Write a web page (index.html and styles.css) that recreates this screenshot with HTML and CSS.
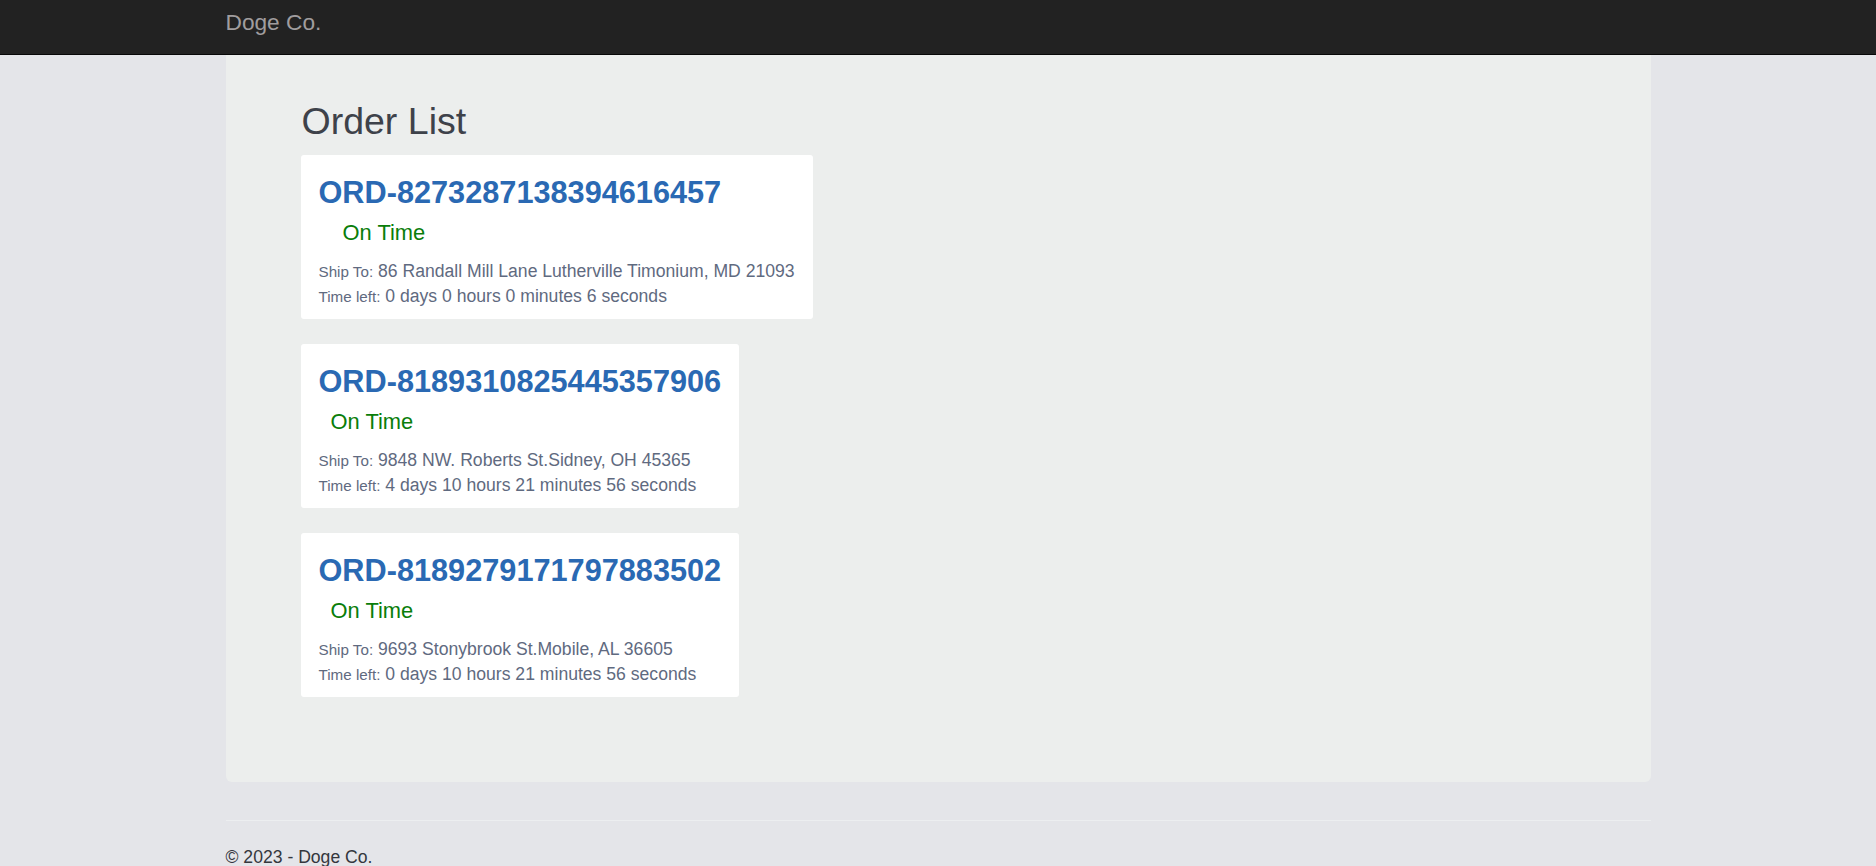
FILE: index.html
```html
<!DOCTYPE html>
<html lang="en">
<head>
<meta charset="utf-8">
<title>Order List - Doge Co.</title>
<link rel="stylesheet" href="styles.css">
</head>
<body>
<nav class="navbar">
  <div class="navbar-inner">
    <a class="brand" href="#">Doge Co.</a>
  </div>
</nav>
<main class="page">
  <h2 class="page-title">Order List</h2>
  <div class="order-list">
    <div class="order-card">
      <h3 class="order-id">ORD-8273287138394616457</h3>
      <div class="status status-wide">On Time</div>
      <div class="details">
        <div class="line"><small class="label">Ship To:</small> 86 Randall Mill Lane Lutherville Timonium, MD 21093</div>
        <div class="line"><small class="label">Time left:</small> 0 days 0 hours 0 minutes 6 seconds</div>
      </div>
    </div>
    <div class="order-card">
      <h3 class="order-id">ORD-8189310825445357906</h3>
      <div class="status">On Time</div>
      <div class="details">
        <div class="line"><small class="label">Ship To:</small> 9848 NW. Roberts St.Sidney, OH 45365</div>
        <div class="line"><small class="label">Time left:</small> 4 days 10 hours 21 minutes 56 seconds</div>
      </div>
    </div>
    <div class="order-card">
      <h3 class="order-id">ORD-8189279171797883502</h3>
      <div class="status">On Time</div>
      <div class="details">
        <div class="line"><small class="label">Ship To:</small> 9693 Stonybrook St.Mobile, AL 36605</div>
        <div class="line"><small class="label">Time left:</small> 0 days 10 hours 21 minutes 56 seconds</div>
      </div>
    </div>
  </div>
</main>
<footer class="footer">
  <hr class="footer-rule">
  <p class="footer-text">&copy; 2023 - Doge Co.</p>
</footer>
</body>
</html>
```
FILE: styles.css
```css
* { box-sizing: border-box; }

html, body {
  margin: 0;
  padding: 0;
}

body {
  background: #e4e5e9;
  font-family: "Liberation Sans", Arial, Helvetica, sans-serif;
  font-size: 17.6px;
  line-height: 25px;
  color: #333;
}

.navbar {
  background: #222222;
  border-bottom: 1px solid #080808;
  height: 55px;
}

.navbar-inner {
  width: 1425px;
  margin: 0 auto;
  padding-top: 9px;
}

.brand {
  display: inline-block;
  font-size: 22.7px;
  line-height: 26px;
  color: #a09d9e;
  text-decoration: none;
}

.page {
  width: 1425px;
  margin: 0 auto;
  background: #eceeed;
  border-radius: 0 0 6px 6px;
  padding: 46px 75px 85px 76px;
}

.page-title {
  margin: 0 0 13px;
  font-size: 37.5px;
  line-height: 40.5px;
  font-weight: normal;
  color: #3e424a;
}

.order-list {
  display: flex;
  flex-direction: column;
  align-items: flex-start;
  gap: 25px;
}

.order-card {
  margin-left: -1px;
  background: #ffffff;
  border-radius: 3px;
  padding: 21px 18px 9px;
}

.order-id {
  margin: 0;
  font-size: 30.7px;
  line-height: 33px;
  font-weight: bold;
  color: #2a69b3;
}

.status {
  margin-top: 11px;
  padding-left: 12px;
  font-size: 21.9px;
  line-height: 26px;
  color: #0a7d0a;
}

.status-wide {
  padding-left: 24px;
}

.details {
  margin-top: 13px;
  color: #5f6a80;
}

.line {
  line-height: 24.5px;
  white-space: nowrap;
}

.label {
  font-size: 15.2px;
}

.footer {
  width: 1425px;
  margin: 0 auto;
  padding-top: 38px;
}

.footer-rule {
  margin: 0;
  border: 0;
  border-top: 1px solid #eceef0;
}

.footer-text {
  margin: 24px 0 0;
  color: #34373d;
}
```
